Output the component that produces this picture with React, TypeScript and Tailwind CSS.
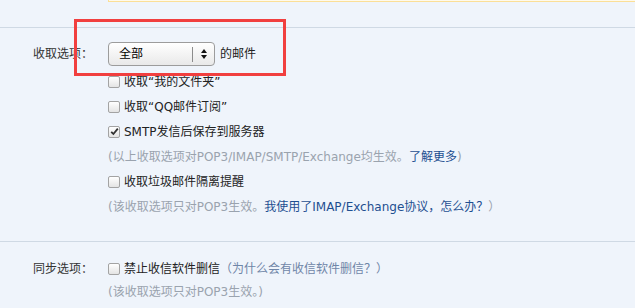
import React from "react";

const font = { fontFamily: '"DejaVu Sans", "Noto Sans CJK SC", sans-serif' };

function Checkbox({ checked = false }: { checked?: boolean }) {
  return (
    <span className="w-[12px] h-[12px] shrink-0 rounded-[2px] border border-[#a3a3a3] bg-gradient-to-b from-white to-[#e4e4e4] flex items-center justify-center">
      {checked && (
        <svg width="9" height="9" viewBox="0 0 9 9">
          <path d="M1.2 4.8 L3.4 7 L7.8 1.6" fill="none" stroke="#333" strokeWidth="1.8" />
        </svg>
      )}
    </span>
  );
}

function CheckRow({ children, checked }: { children: React.ReactNode; checked?: boolean }) {
  return (
    <div className="h-[25px] flex items-center gap-[4px] text-[12px] text-[#222] whitespace-nowrap">
      <Checkbox checked={checked} />
      <span>{children}</span>
    </div>
  );
}

export default function App() {
  return (
    <div className="relative w-[635px] h-[308px] overflow-hidden bg-[#eff4fb]" style={font}>
      {/* tail of the notice box above */}
      <div className="ml-[108px] h-[2px] border-l border-b border-[#fbdf97] bg-[#fffaeb]" />

      <div className="mt-[25px] border-t border-[#cfd9e4]" />

      {/* 收取选项 */}
      <div className="flex pt-[14px] pb-[22px]">
        <div className="w-[108px] shrink-0 pl-[33px] h-[24px] flex items-center text-[12px] text-[#333]">
          收取选项：
        </div>
        <div className="flex flex-col">
          <div className="flex items-center gap-[5px] h-[24px] mb-[3px]">
            <div className="w-[107px] h-[24px] rounded-[4px] border border-[#9c9c9c] bg-gradient-to-b from-white to-[#e9e9e9] flex items-center">
              <span className="pl-[10px] text-[12px] text-black flex-1">全部</span>
              <span className="w-px h-[15px] bg-[#8c8c8c]" />
              <span className="w-[21px] flex flex-col items-center gap-[2px]">
                <svg width="6" height="4" viewBox="0 0 6 4"><path d="M0 4 L3 0 L6 4 Z" fill="#111" /></svg>
                <svg width="6" height="4" viewBox="0 0 6 4"><path d="M0 0 L3 4 L6 0 Z" fill="#111" /></svg>
              </span>
            </div>
            <span className="text-[12px] text-[#222]">的邮件</span>
          </div>
          <CheckRow>收取“我的文件夹”</CheckRow>
          <CheckRow>收取“QQ邮件订阅”</CheckRow>
          <CheckRow checked>SMTP发信后保存到服务器</CheckRow>
          <div className="h-[25px] flex items-center text-[12px] text-[#9aa3ae] whitespace-nowrap">
            (以上收取选项对POP3/IMAP/SMTP/Exchange均生效。<span className="text-[#1e4f91]">了解更多</span>)
          </div>
          <CheckRow>收取垃圾邮件隔离提醒</CheckRow>
          <div className="h-[25px] flex items-center text-[12px] text-[#9aa3ae] whitespace-nowrap">
            (该收取选项只对POP3生效。<span className="text-[#1e4f91]">我使用了IMAP/Exchange协议，怎么办？</span>）
          </div>
        </div>
      </div>

      <div className="border-t border-[#cfd9e4]" />

      {/* 同步选项 */}
      <div className="flex pt-[15px]">
        <div className="w-[108px] shrink-0 pl-[33px] h-[23px] flex items-center text-[12px] text-[#333]">
          同步选项：
        </div>
        <div className="flex flex-col">
          <div className="h-[23px] flex items-center gap-[4px] text-[12px] text-[#222] whitespace-nowrap">
            <Checkbox />
            <span>
              禁止收信软件删信<span className="text-[#6f86a8]">（为什么会有收信软件删信？）</span>
            </span>
          </div>
          <div className="h-[23px] flex items-center text-[12px] text-[#9aa3ae] whitespace-nowrap">
            (该收取选项只对POP3生效。)
          </div>
        </div>
      </div>

      {/* red annotation frame */}
      <div className="absolute left-[74px] top-[19px] w-[212px] h-[57px] border-[3px] border-[#f13f3f]" />
    </div>
  );
}
